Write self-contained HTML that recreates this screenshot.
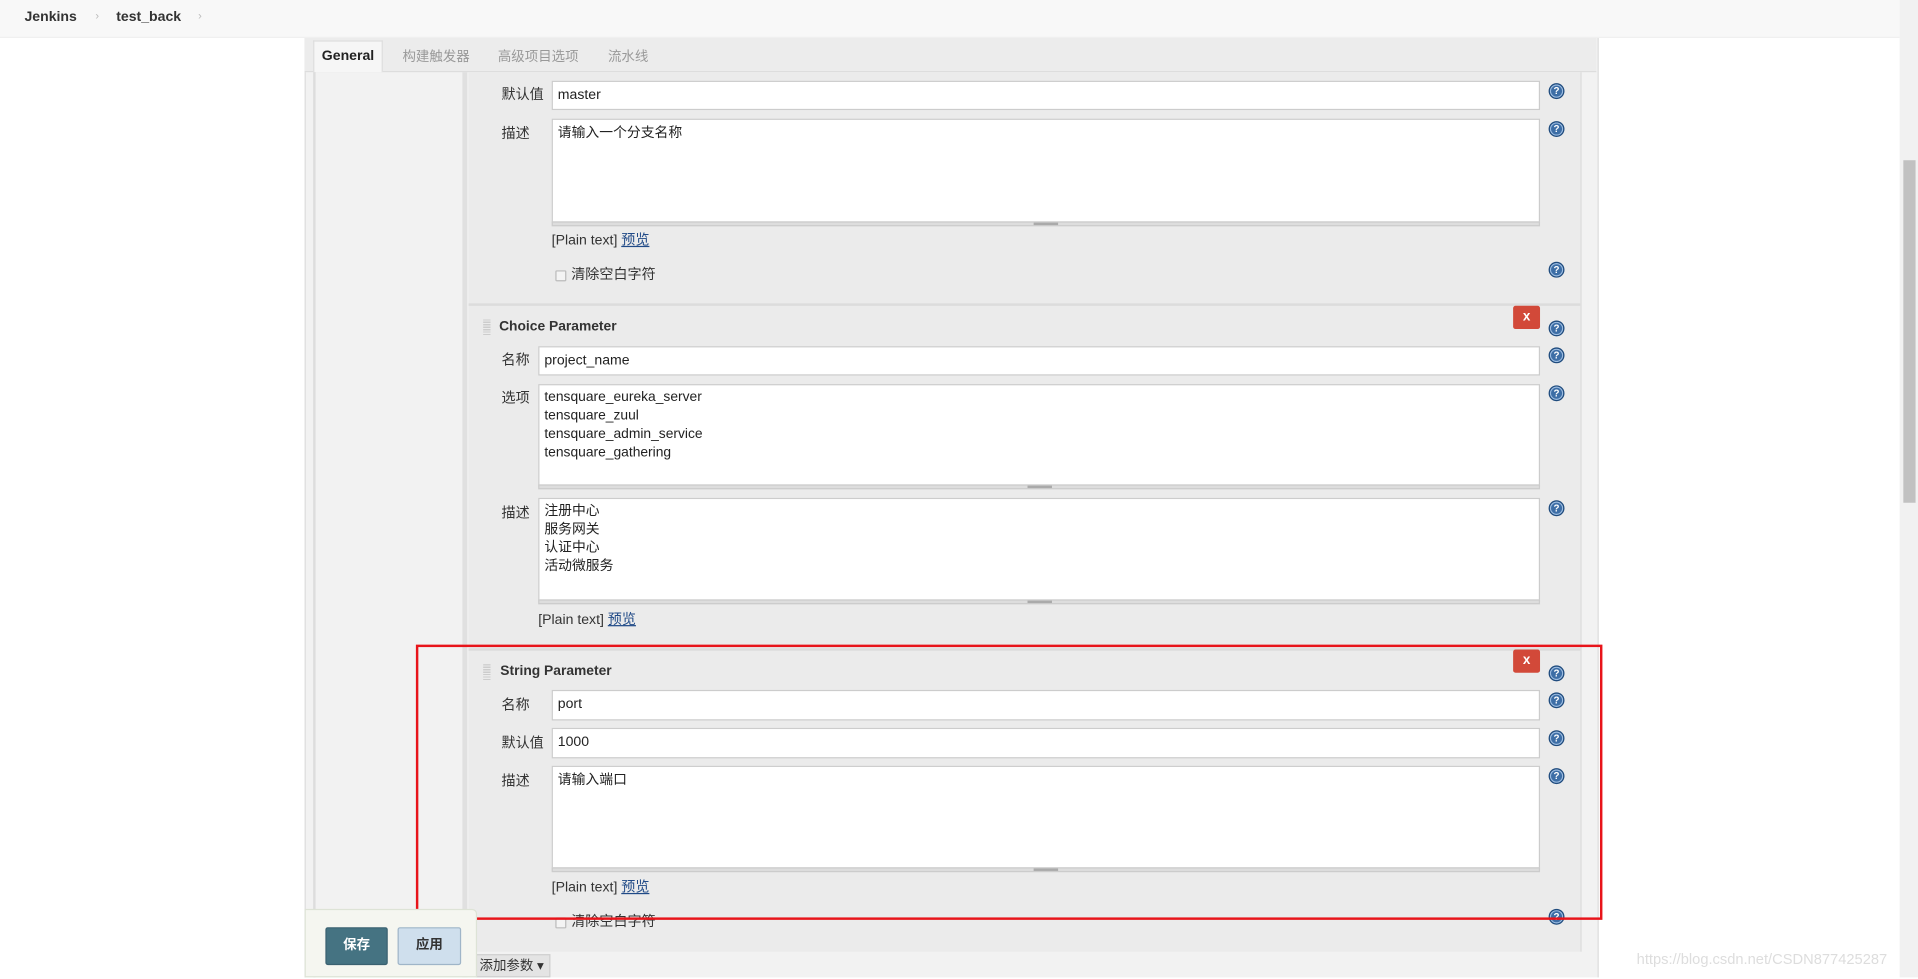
<!DOCTYPE html>
<html><head><meta charset="utf-8"><style>
html,body{margin:0;padding:0;width:1918px;height:977px;overflow:hidden;background:#fff}
#w{position:absolute;left:0;top:0;width:1568px;height:799px;transform:scale(1.22322);transform-origin:0 0;font-family:"Liberation Sans","Noto Sans CJK SC",sans-serif;font-size:11.5px;color:#333}
.a{position:absolute}
.inp{position:absolute;background:#fff;border:1px solid #ccc;box-sizing:border-box;padding:0 4px;font-size:11.5px;color:#222}
.ta{position:absolute;background:#fff;border:1px solid #ccc;box-sizing:border-box;padding:4px 4px;font-size:11.3px;line-height:15px;color:#222}
.hd{position:absolute;height:4px;background:#ddd;border:1px solid #ccc;box-sizing:border-box}
.hd::after{content:"";position:absolute;left:50%;margin-left:-10px;width:20px;top:0;height:2px;background:#aaa}
.lb{position:absolute;font-size:11.5px;color:#333}
.q{position:absolute;width:11px;height:11px;border-radius:50%;background:#3d6ea6;border:1px solid #1f4b7d;color:#fff;font:bold 8px/11px "Liberation Sans",sans-serif;text-align:center;box-shadow:inset 0 0 0 1px #9bbbe0}
.x{position:absolute;width:22px;height:19px;background:#d24939;color:#fff;font:bold 11px/19px "Liberation Sans",sans-serif;text-align:center;border-radius:2px}
.pt{position:absolute;font-size:11.5px;color:#333}
.pt u{color:#204a87}
.cb{position:absolute;width:7px;height:7px;border:1px solid #bbb;background:#f4f4f4;border-radius:1px}
.grip{position:absolute;width:6px;height:13px;background:repeating-linear-gradient(0deg,#ccc 0 1px,transparent 1px 2px)}
.sh{position:absolute;font-weight:bold;font-size:11.3px;color:#333}
</style></head><body><div id="w">
<div class="a" style="left:0;top:0;width:1553px;height:30px;background:#f8f8f8;border-bottom:1px solid #f0f0f0"></div>
<div class="a" style="left:20px;top:8px;font-weight:bold;color:#333;font-size:11.5px">Jenkins</div>
<div class="a" style="left:78px;top:8px;color:#bbb;font-size:9px">›</div>
<div class="a" style="left:95px;top:8px;font-weight:bold;color:#333;font-size:11.5px">test_back</div>
<div class="a" style="left:162px;top:8px;color:#bbb;font-size:9px">›</div>

<div class="a" style="left:249px;top:31px;width:1056px;height:768px;background:#f2f2f2;border-left:1px solid #ddd;border-right:1px solid #ddd"></div>
<div class="a" style="left:249px;top:31px;width:1056px;height:27px;background:#ececec;border-bottom:1px solid #ddd"></div>
<div class="a" style="left:256px;top:33px;width:57px;height:26px;background:#f6f6f6;border:1px solid #ddd;border-bottom:none;box-sizing:border-box;font-weight:bold;font-size:11.5px;line-height:24px;text-align:center;color:#222">General</div>
<div class="a" style="left:329px;top:38px;color:#999;font-size:11px">构建触发器</div>
<div class="a" style="left:407px;top:38px;color:#999;font-size:11px">高级项目选项</div>
<div class="a" style="left:497px;top:38px;color:#999;font-size:11px">流水线</div>
<div class="a" style="left:256px;top:59px;width:2px;height:740px;background:#ddd"></div>
<div class="a" style="left:378px;top:59px;width:4px;height:740px;background:#e0e0e0"></div>
<div class="a" style="left:383px;top:59px;width:909px;height:719px;background:#ebebeb;border-right:1px solid #ddd"></div>

<div class="lb" style="left:410px;top:69px">默认值</div>
<div class="inp" style="left:451px;top:66px;width:808px;height:24px;line-height:22px">master</div>
<div class="q" style="left:1266px;top:68px">?</div>
<div class="lb" style="left:410px;top:101px">描述</div>
<div class="ta" style="left:451px;top:97px;width:808px;height:85px">请输入一个分支名称</div>
<div class="hd" style="left:451px;top:181px;width:808px"></div>
<div class="q" style="left:1266px;top:99px">?</div>
<div class="pt" style="left:451px;top:188px">[Plain text] <u>预览</u></div>
<div class="cb" style="left:454px;top:221px"></div>
<div class="lb" style="left:467px;top:216px">清除空白字符</div>
<div class="q" style="left:1266px;top:214px">?</div>
<div class="a" style="left:383px;top:248px;width:909px;height:2px;background:#dcdcdc"></div>

<div class="grip" style="left:395px;top:261px"></div>
<div class="sh" style="left:408px;top:261px">Choice Parameter</div>
<div class="x" style="left:1237px;top:250px">x</div>
<div class="q" style="left:1266px;top:262px">?</div>
<div class="lb" style="left:410px;top:286px">名称</div>
<div class="inp" style="left:440px;top:283px;width:819px;height:24px;line-height:22px">project_name</div>
<div class="q" style="left:1266px;top:284px">?</div>
<div class="lb" style="left:410px;top:317px">选项</div>
<div class="ta" style="left:440px;top:314px;width:819px;height:84px;padding-top:3px">tensquare_eureka_server<br>tensquare_zuul<br>tensquare_admin_service<br>tensquare_gathering</div>
<div class="hd" style="left:440px;top:396px;width:819px"></div>
<div class="q" style="left:1266px;top:315px">?</div>
<div class="lb" style="left:410px;top:411px">描述</div>
<div class="ta" style="left:440px;top:407px;width:819px;height:85px;padding-top:3px">注册中心<br>服务网关<br>认证中心<br>活动微服务</div>
<div class="hd" style="left:440px;top:490px;width:819px"></div>
<div class="q" style="left:1266px;top:409px">?</div>
<div class="pt" style="left:440px;top:498px">[Plain text] <u>预览</u></div>
<div class="a" style="left:383px;top:530px;width:909px;height:2px;background:#dcdcdc"></div>

<div class="grip" style="left:395px;top:543px"></div>
<div class="sh" style="left:409px;top:543px">String Parameter</div>
<div class="x" style="left:1237px;top:531px">x</div>
<div class="q" style="left:1266px;top:544px">?</div>
<div class="lb" style="left:410px;top:568px">名称</div>
<div class="inp" style="left:451px;top:564px;width:808px;height:25px;line-height:23px">port</div>
<div class="q" style="left:1266px;top:566px">?</div>
<div class="lb" style="left:410px;top:599px">默认值</div>
<div class="inp" style="left:451px;top:595px;width:808px;height:25px;line-height:23px">1000</div>
<div class="q" style="left:1266px;top:597px">?</div>
<div class="lb" style="left:410px;top:630px">描述</div>
<div class="ta" style="left:451px;top:626px;width:808px;height:85px;padding-top:4px">请输入端口</div>
<div class="hd" style="left:451px;top:709px;width:808px"></div>
<div class="q" style="left:1266px;top:628px">?</div>
<div class="pt" style="left:451px;top:717px">[Plain text] <u>预览</u></div>
<div class="cb" style="left:454px;top:750px"></div>
<div class="lb" style="left:467px;top:745px">清除空白字符</div>
<div class="q" style="left:1266px;top:743px">?</div>

<div class="a" style="left:389px;top:780px;width:61px;height:19px;background:#e4e4e4;border:1px solid #d0d0d0;box-sizing:border-box;font-size:11px;line-height:19px;padding-left:2px">添加参数 ▾</div>

<div class="a" style="left:340px;top:527px;width:966px;height:221px;border:2px solid #e8141a"></div>

<div class="a" style="left:249px;top:743px;width:141px;height:56px;background:#f5f6f0;border:1px solid #dde3d6;border-radius:0 4px 0 0;box-sizing:border-box"></div>
<div class="a" style="left:266px;top:758px;width:51px;height:31px;background:#457382;border:1px solid #3a6170;border-radius:2px;box-sizing:border-box;color:#fff;font-weight:bold;font-size:11px;line-height:29px;text-align:center">保存</div>
<div class="a" style="left:325px;top:758px;width:52px;height:31px;background:#cfdfed;border:1px solid #9fb5c8;border-radius:2px;box-sizing:border-box;color:#333;font-weight:bold;font-size:11px;line-height:29px;text-align:center">应用</div>

<div class="a" style="left:1338px;top:777px;color:#ddd;font-size:12px">https://blog.csdn.net/CSDN877425287</div>

<div class="a" style="left:1553px;top:0;width:15px;height:799px;background:#f1f1f1"></div>
<div class="a" style="left:1556px;top:131px;width:10px;height:280px;background:#c1c1c1"></div>
</div></body></html>
